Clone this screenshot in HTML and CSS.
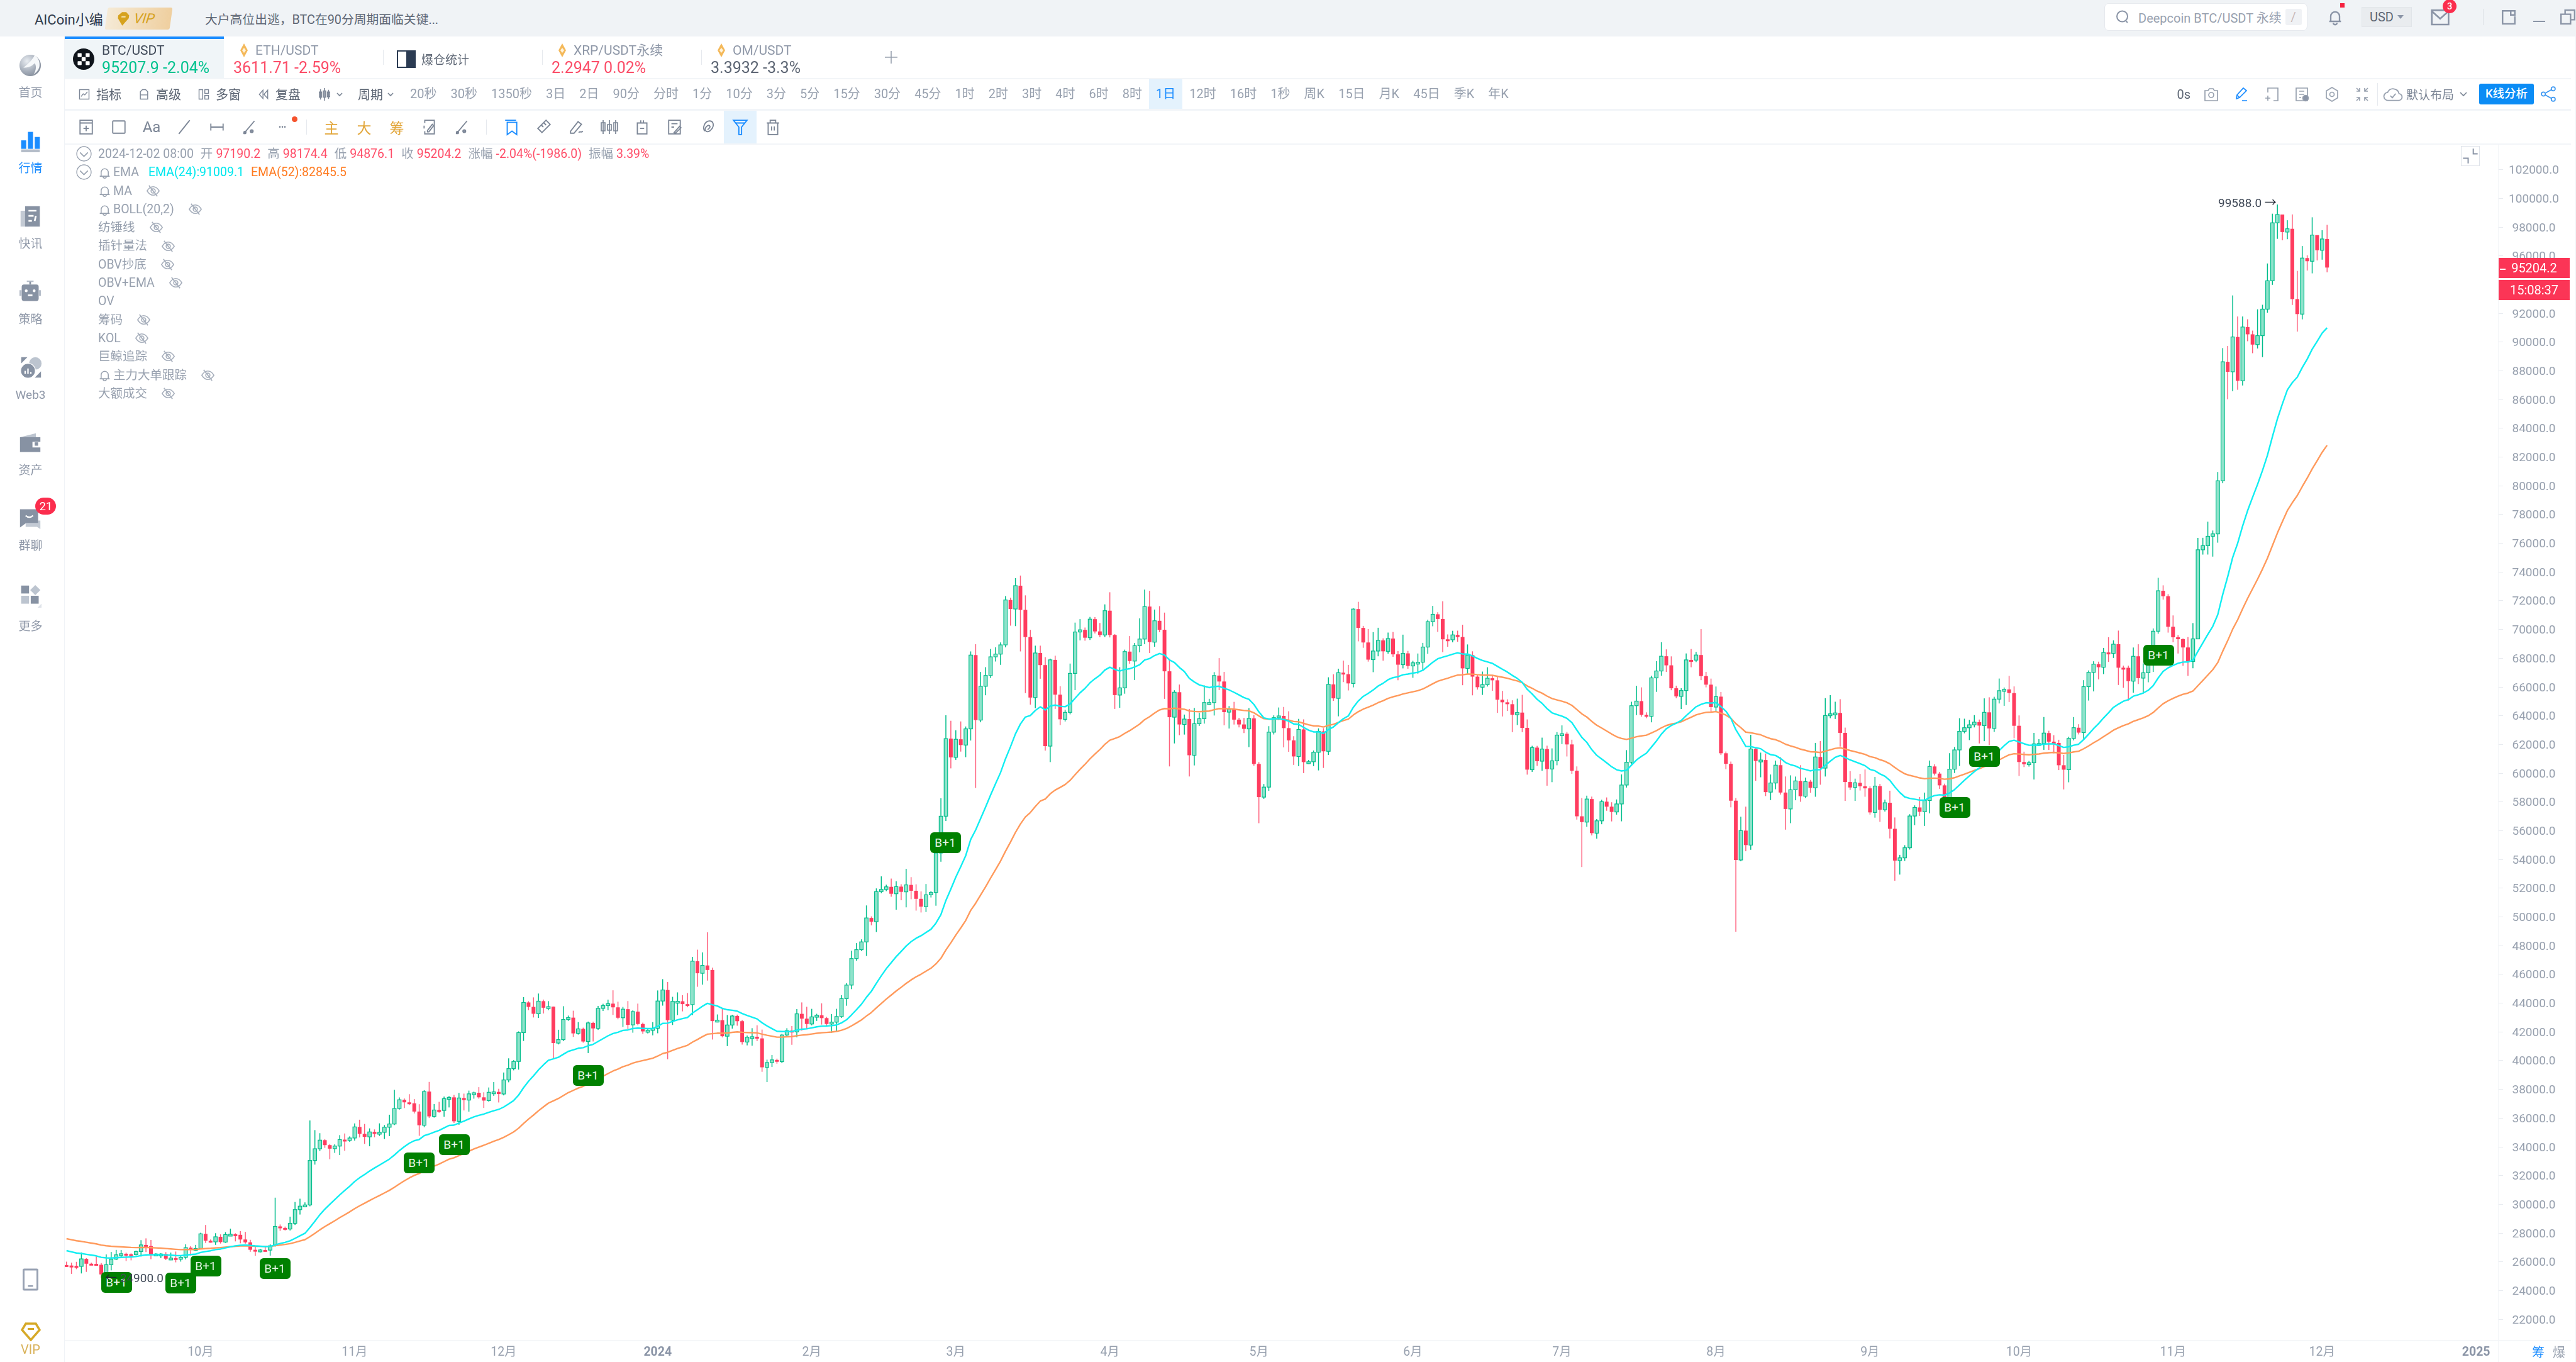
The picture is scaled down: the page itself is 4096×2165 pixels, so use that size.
FILE: index.html
```html
<!DOCTYPE html>
<html lang="zh-CN">
<head>
  <meta charset="utf-8">
  <title>AICoin BTC/USDT</title>
  <link rel="stylesheet" href="styles.css">
</head>
<body>
  <svg class="defs" width="0" height="0">
    <symbol id="eye" viewBox="0 0 24 24"><path d="M2 12c3-5 6.500-7 10-7s7 2 10 7c-3 5-6.500 7-10 7s-7-2-10-7z" fill="none" stroke="currentColor" stroke-width="1.700"/><circle cx="12" cy="12" r="3.500" fill="none" stroke="currentColor" stroke-width="1.700"/><path d="M5 3l14 18" stroke="currentColor" stroke-width="1.700"/></symbol>
    <symbol id="bell" viewBox="0 0 24 24"><path d="M3 19h18M5.500 19v-7a6.500 6.500 0 0 1 13 0v7M9 19.500a3 3 0 0 0 6 0" fill="none" stroke="currentColor" stroke-width="1.800"/></symbol>
    <symbol id="chev" viewBox="0 0 24 24"><circle cx="12" cy="12" r="11" fill="none" stroke="currentColor" stroke-width="1.300"/><path d="M6 10l6 6 6-6" fill="none" stroke="currentColor" stroke-width="1.500"/></symbol>
    <symbol id="coin" viewBox="0 0 16 24"><path d="M8 1l6 11-6 11-6-11z" fill="#f4b95a"/><path d="M8 8l3 4-3 4-3-4z" fill="#fff3dc"/></symbol>
  </svg>

  <header class="topbar">
    <span class="user-name">AICoin小编</span>
    <span class="vip-tag"><svg class="vip-gem" viewBox="0 0 20 24"><path d="M2 7l5-5h6l5 5v4l-8 11-8-11z" fill="#d6a21e"/><rect x="7" y="8" width="6" height="2" fill="#f5e2b0"/></svg>VIP</span>
    <span class="headline">大户高位出逃，BTC在90分周期面临关键...</span>
    <div class="top-right">
      <div class="search">
        <svg class="ic search-ic" viewBox="0 0 24 24"><circle cx="11.500" cy="11" r="8.500"/><path d="M17 18l3 3"/></svg>
        <span class="search-text">Deepcoin BTC/USDT 永续</span>
        <span class="search-key">/</span>
      </div>
      <span class="bell-box">
        <svg class="ic top-ic" viewBox="0 0 24 24"><path d="M4 18h16M6 18v-7a6 6 0 0 1 12 0v7M9.500 20a2.500 2.500 0 0 0 5 0"/></svg>
        <i class="red-dot"></i>
      </span>
      <span class="currency">USD<i class="caret"></i></span>
      <span class="mail-box">
        <svg class="ic top-ic" viewBox="0 0 24 24"><path d="M2 4h20v17H2zM2 5l10 9 10-9"/></svg>
        <b class="mail-badge">3</b>
      </span>
      <i class="top-sep"></i>
      <svg class="ic win-ic" viewBox="0 0 24 24"><path d="M14 3H3v19h18V11M15 3h6v6h-6z"/></svg>
      <i class="win-min"></i>
      <svg class="ic win-ic" viewBox="0 0 24 24"><path d="M2 8h14v14H2zM8 8V2h14v14h-6"/></svg>
    </div>
  </header>

  <div class="main">
    <nav class="side">
      <a class="side-item">
        <svg class="side-ic" viewBox="0 0 40 40"><defs><radialGradient id="globe" cx=".35" cy=".3" r=".8"><stop offset="0" stop-color="#e8ecf1"/><stop offset=".6" stop-color="#a6aeba"/><stop offset="1" stop-color="#7f8896"/></radialGradient></defs><circle cx="20" cy="20" r="19" fill="url(#globe)"/><path d="M28 2c-4 8-10 14-20 22 8 0 14-2 20-8 3 4 3 12-2 20 8-6 12-12 10-22-1-5-4-9-8-12z" fill="#f6f8fa"/></svg>
        <span>首页</span>
      </a>
      <a class="side-item side-active">
        <svg class="side-ic" viewBox="0 0 40 40"><rect x="4" y="19" width="9" height="15" fill="#1a8cff"/><rect x="16" y="4" width="9" height="30" fill="#1a8cff"/><rect x="28" y="13" width="9" height="21" fill="#1a8cff"/><rect x="4" y="35" width="33" height="5" fill="#b5bdc9"/></svg>
        <span>行情</span>
      </a>
      <a class="side-item">
        <svg class="side-ic" viewBox="0 0 40 40"><rect x="3" y="10" width="14" height="28" fill="#c3cad4"/><rect x="11" y="2" width="26" height="36" fill="#8792a3"/><path d="M17 10h14M17 19h9M17 28h6M30 19l-2 9" stroke="#fff" stroke-width="3" fill="none"/></svg>
        <span>快讯</span>
      </a>
      <a class="side-item">
        <svg class="side-ic" viewBox="0 0 40 40"><rect x="14" y="0" width="12" height="2.500" fill="#b5bdc9"/><rect x="18.500" y="2" width="3" height="5" fill="#8792a3"/><rect x="5" y="7" width="30" height="29" rx="4" fill="#8792a3"/><rect x="1" y="17" width="4" height="10" fill="#b5bdc9"/><rect x="35" y="17" width="4" height="10" fill="#b5bdc9"/><circle cx="13" cy="18" r="2.500" fill="#fff"/><circle cx="27" cy="18" r="2.500" fill="#fff"/><path d="M16 26h8" stroke="#fff" stroke-width="3"/></svg>
        <span>策略</span>
      </a>
      <a class="side-item">
        <svg class="side-ic" viewBox="0 0 40 40"><path d="M3 2h11L3 13z" fill="#8792a3"/><path d="M38 27v11H27z" fill="#8792a3"/><circle cx="28" cy="13" r="11" fill="#bcc4cf"/><circle cx="15" cy="26" r="13" fill="#8792a3" stroke="#fff" stroke-width="1.500"/><path d="M10 31v-5M15 31v-9M20 31v-3" stroke="#fff" stroke-width="2.500"/></svg>
        <span>Web3</span>
      </a>
      <a class="side-item">
        <svg class="side-ic" viewBox="0 0 40 40"><path d="M2 10l28-7v7z" fill="#bcc4cf"/><path d="M2 10h36v8H24v10h14v8H2z" fill="#8792a3"/><rect x="28" y="19" width="6" height="6" fill="#8792a3"/></svg>
        <span>资产</span>
      </a>
      <a class="side-item">
        <svg class="side-ic" viewBox="0 0 40 40"><path d="M12 24h26v15l-6-4H12z" fill="#c3cad4"/><path d="M2 4h32v24H13l-11 8z" fill="#8792a3"/><path d="M12 15c4 4 9 4 13 0" stroke="#fff" stroke-width="2.500" fill="none"/></svg>
        <span>群聊</span>
        <b class="side-badge">21</b>
      </a>
      <a class="side-item side-more">
        <svg class="side-ic" viewBox="0 0 40 40"><rect x="4" y="2" width="14" height="14" fill="#8792a3"/><path d="M29 1l9 9-9 9-9-9z" fill="#bcc4cf"/><rect x="4" y="20" width="14" height="14" fill="#bcc4cf"/><rect x="21" y="20" width="14" height="14" fill="#8792a3"/><path d="M42 32v9h-9z" fill="#dfe3e9"/></svg>
        <span>更多</span>
      </a>
      <div class="side-bottom">
        <svg class="phone-ic" viewBox="0 0 26 36"><rect x="2" y="2" width="22" height="32" rx="1" fill="none" stroke="#98a2b3" stroke-width="3"/><rect x="9" y="27" width="8" height="2.500" fill="#98a2b3"/></svg>
        <a class="side-vip">
          <svg class="vip-ic" viewBox="0 0 32 30"><path d="M8 2h16l6 10-14 16L2 12z" fill="none" stroke="#d6a928" stroke-width="3.500"/><rect x="11" y="9" width="10" height="3" fill="#d6a928"/></svg>
          <span>VIP</span>
        </a>
      </div>
    </nav>

    <div class="content">
      <div class="tabs">
        <div class="tab tab-on">
          <svg class="tab-logo" viewBox="0 0 32 32"><circle cx="16" cy="16" r="16" fill="#10151c"/><rect x="7" y="7" width="6" height="6" rx="1" fill="#fff"/><rect x="19" y="7" width="6" height="6" rx="1" fill="#fff"/><rect x="13" y="13" width="6" height="6" rx="1" fill="#fff"/><rect x="7" y="19" width="6" height="6" rx="1" fill="#fff"/><rect x="19" y="19" width="6" height="6" rx="1" fill="#fff"/></svg>
          <div>
            <div class="tab-name tab-name-on">BTC/USDT</div>
            <div class="tab-price up">95207.9 -2.04%</div>
          </div>
        </div>
        <div class="tab tab-pair">
          <div>
            <div class="tab-name"><svg class="tab-coin"><use href="#coin"/></svg>ETH/USDT</div>
            <div class="tab-price down">3611.71 -2.59%</div>
          </div>
        </div>
        <div class="tab tab-stat">
          <i class="stat-ic"><i></i></i>
          <span class="stat-name">爆仓统计</span>
        </div>
        <div class="tab tab-pair">
          <div>
            <div class="tab-name"><svg class="tab-coin"><use href="#coin"/></svg>XRP/USDT永续</div>
            <div class="tab-price down">2.2947 0.02%</div>
          </div>
        </div>
        <div class="tab tab-pair tab-last">
          <div>
            <div class="tab-name"><svg class="tab-coin"><use href="#coin"/></svg>OM/USDT</div>
            <div class="tab-price flat">3.3932 -3.3%</div>
          </div>
        </div>
        <svg class="tab-add" viewBox="0 0 24 24"><path d="M12 2v20M2 12h20"/></svg>
      </div>

      <div class="periods">
        <span class="p-btn"><svg class="ic p-ic" viewBox="0 0 24 24"><rect x="3" y="3" width="18" height="18"/><path d="M6 16l4-5 3 2 5-6"/></svg>指标</span>
        <span class="p-btn"><svg class="ic p-ic" viewBox="0 0 24 24"><path d="M5 21V7l4-4h6l4 4v14zM5 13h14"/></svg>高级</span>
        <span class="p-btn"><svg class="ic p-ic" viewBox="0 0 24 24"><path d="M3 3h7v18H3zM14 3h7v7h-7zM14 14h7v7h-7z"/></svg>多窗</span>
        <span class="p-btn"><svg class="ic p-ic" viewBox="0 0 24 24"><path d="M11 4l-7 8 7 8zM20 4l-7 8 7 8z"/></svg>复盘</span>
        <span class="p-btn p-kind"><svg class="ic p-ic" viewBox="0 0 24 24"><path d="M5 3v18M12 1v22M19 4v16M3 8h4v9H3zM10 6h4v11h-4zM17 8h4v8h-4z"/></svg><svg class="ic mini-chev" viewBox="0 0 12 12"><path d="M2 4l4 4 4-4"/></svg></span>
        <span class="p-btn p-cycle">周期<svg class="ic mini-chev" viewBox="0 0 12 12"><path d="M2 4l4 4 4-4"/></svg></span>
        <span class="p-item">20秒</span><span class="p-item">30秒</span><span class="p-item">1350秒</span><span class="p-item">3日</span><span class="p-item">2日</span><span class="p-item">90分</span><span class="p-item">分时</span><span class="p-item">1分</span><span class="p-item">10分</span><span class="p-item">3分</span><span class="p-item">5分</span><span class="p-item">15分</span><span class="p-item">30分</span><span class="p-item">45分</span><span class="p-item">1时</span><span class="p-item">2时</span><span class="p-item">3时</span><span class="p-item">4时</span><span class="p-item">6时</span><span class="p-item">8时</span><span class="p-item p-on">1日</span><span class="p-item">12时</span><span class="p-item">16时</span><span class="p-item">1秒</span><span class="p-item">周K</span><span class="p-item">15日</span><span class="p-item">月K</span><span class="p-item">45日</span><span class="p-item">季K</span><span class="p-item">年K</span>
        <div class="p-right">
          <span class="zero-s">0s</span>
          <svg class="ic r-ic" viewBox="0 0 24 24"><path d="M2 6h5l2-3h6l2 3h5v16H2z"/><circle cx="12" cy="13" r="4"/></svg>
          <svg class="ic r-ic r-blue" viewBox="0 0 24 24"><path d="M4 19l1-6L15 2l5 4L9 17zM13 22h8M5 13l4 4"/></svg>
          <svg class="ic r-ic" viewBox="0 0 24 24"><path d="M6 9V2h16v20h-7M2 18h8M6 14v8"/></svg>
          <svg class="ic r-ic" viewBox="0 0 24 24"><path d="M3 2h18v20H3zM8 7h8M8 12h8M8 17h3"/><circle cx="18" cy="18" r="4.500" fill="#8a94a6"/></svg>
          <svg class="ic r-ic" viewBox="0 0 24 24"><path d="M12 1l9 5.500v11L12 23l-9-5.500v-11z"/><circle cx="12" cy="12" r="3.500"/></svg>
          <svg class="ic r-ic" viewBox="0 0 24 24"><path d="M3 2l5 5M8 2v5H3M21 2l-5 5M16 2v5h5M3 22l5-5M8 22v-5H3M21 22l-5-5M16 22v-5h5"/></svg>
          <i class="r-sep"></i>
          <svg class="ic cloud-ic" viewBox="0 0 30 24"><path d="M8 21a6 6 0 0 1-1-12 9 9 0 0 1 17 2 5 5 0 0 1-1 10zM11 14l3 3 5-6"/></svg>
          <span class="layout-name">默认布局</span>
          <svg class="ic mini-chev layout-chev" viewBox="0 0 12 12"><path d="M1 3l5 5 5-5"/></svg>
          <span class="k-btn">K线分析</span>
          <svg class="ic share-ic" viewBox="0 0 24 24"><circle cx="19" cy="4" r="3"/><circle cx="4" cy="12" r="3"/><circle cx="19" cy="20" r="3"/><path d="M7 10.500L16 5.500M7 13.500l9 5"/></svg>
        </div>
      </div>

      <div class="tools">
        <span class="t-item"><svg class="ic t-ic" viewBox="0 0 24 24"><path d="M3 2h18v20H3zM3 6h18M12 10v8M8 14h8"/></svg></span>
        <span class="t-item"><svg class="ic t-ic" viewBox="0 0 24 24"><rect x="3" y="3" width="18" height="18" rx="1"/></svg></span>
        <span class="t-item t-text">Aa</span>
        <span class="t-item"><svg class="ic t-ic" viewBox="0 0 24 24"><path d="M4 22L20 2"/></svg></span>
        <span class="t-item"><svg class="ic t-ic" viewBox="0 0 24 24"><path d="M3 7v10M21 7v10M3 12h18"/></svg></span>
        <span class="t-item"><svg class="ic t-ic" viewBox="0 0 24 24"><path d="M3 22L19 3"/><circle cx="15" cy="18" r="2" fill="#8a94a6"/><circle cx="5" cy="20" r="1.500"/></svg></span>
        <span class="t-item t-dots">•••<i class="t-dot"></i></span>
        <i class="t-sep"></i>
        <span class="t-item t-gold">主</span>
        <span class="t-item t-gold">大</span>
        <span class="t-item t-gold">筹</span>
        <span class="t-item"><svg class="ic t-ic" viewBox="0 0 24 24"><path d="M5 6V2h14v20H5v-4M4 10v4M9 17l7-9 2 2-7 9h-2z"/></svg></span>
        <span class="t-item"><svg class="ic t-ic" viewBox="0 0 24 24"><path d="M3 22L19 3"/><circle cx="15" cy="18" r="2" fill="#8a94a6"/><circle cx="5" cy="20" r="1.500"/></svg></span>
        <i class="t-sep"></i>
        <span class="t-item"><svg class="ic t-ic t-blue" viewBox="0 0 24 24"><path d="M3 2h16M6 5h14v18l-7-5-7 5z"/></svg></span>
        <span class="t-item"><svg class="ic t-ic" viewBox="0 0 24 24"><path d="M3 14L15 2l6 6L9 20zM8 9l3 3M12 6l3 3"/></svg></span>
        <span class="t-item"><svg class="ic t-ic" viewBox="0 0 24 24"><path d="M3 18L14 4l5 4L8 21H3zM15 20c2-3 3 1 6-2"/></svg></span>
        <span class="t-item"><svg class="ic t-ic t-wide" viewBox="0 0 32 24"><path d="M6 1v22M16 1v22M26 1v22M3 5h6v13H3zM13 8h6v9h-6zM23 5h6v13h-6z"/></svg></span>
        <span class="t-item"><svg class="ic t-ic" viewBox="0 0 24 24"><path d="M5 6h14v16H5zM10 2v4M14 2v4M9 14h6"/></svg></span>
        <span class="t-item"><svg class="ic t-ic" viewBox="0 0 24 24"><path d="M3 2h17v20H3zM7 7h9M7 12h4M11 20l8-9 2 2-8 8z"/></svg></span>
        <span class="t-item"><svg class="ic t-ic" viewBox="0 0 24 24"><path d="M8 18c-4-5 0-15 7-15 6 0 7 7 3 12-3 4-7 5-9 2-2-3 3-9 6-7 2 2-2 6-3 5"/></svg></span>
        <span class="t-item t-on"><svg class="ic t-ic t-blue" viewBox="0 0 24 24"><path d="M2 2h20l-8 10v11h-4V12zM5 6h14"/></svg></span>
        <span class="t-item"><svg class="ic t-ic" viewBox="0 0 24 24"><path d="M3 6h18M8 6V2h8v4M5 6v17h14V6M10 11v6M14 11v6"/></svg></span>
      </div>

      <div class="chart-row">
        <div class="plot">
          <div class="plot-area" id="plotArea">
            <canvas class="plot-canvas" id="candles"></canvas>
            <div class="legend">
              <div class="lg-row"><svg class="lg-chev"><use href="#chev"/></svg><span>2024-12-02 08:00</span><span class="lg-key">开</span><span class="lg-red">97190.2</span><span class="lg-key">高</span><span class="lg-red">98174.4</span><span class="lg-key">低</span><span class="lg-red">94876.1</span><span class="lg-key">收</span><span class="lg-red">95204.2</span><span class="lg-key">涨幅</span><span class="lg-red">-2.04%(-1986.0)</span><span class="lg-key">振幅</span><span class="lg-red">3.39%</span></div>
              <div class="lg-row"><svg class="lg-chev"><use href="#chev"/></svg><svg class="lg-bell"><use href="#bell"/></svg><span>EMA</span><span class="lg-cyan">EMA(24):91009.1</span><span class="lg-orange">EMA(52):82845.5</span></div>
              <div class="lg-row lg-sub"><svg class="lg-bell"><use href="#bell"/></svg><span>MA</span><svg class="lg-eye"><use href="#eye"/></svg></div>
              <div class="lg-row lg-sub"><svg class="lg-bell"><use href="#bell"/></svg><span>BOLL(20,2)</span><svg class="lg-eye"><use href="#eye"/></svg></div>
              <div class="lg-row lg-sub"><span>纺锤线</span><svg class="lg-eye"><use href="#eye"/></svg></div>
              <div class="lg-row lg-sub"><span>插针量法</span><svg class="lg-eye"><use href="#eye"/></svg></div>
              <div class="lg-row lg-sub"><span>OBV抄底</span><svg class="lg-eye"><use href="#eye"/></svg></div>
              <div class="lg-row lg-sub"><span>OBV+EMA</span><svg class="lg-eye"><use href="#eye"/></svg></div>
              <div class="lg-row lg-sub"><span>OV</span></div>
              <div class="lg-row lg-sub"><span>筹码</span><svg class="lg-eye"><use href="#eye"/></svg></div>
              <div class="lg-row lg-sub"><span>KOL</span><svg class="lg-eye"><use href="#eye"/></svg></div>
              <div class="lg-row lg-sub"><span>巨鲸追踪</span><svg class="lg-eye"><use href="#eye"/></svg></div>
              <div class="lg-row lg-sub"><svg class="lg-bell"><use href="#bell"/></svg><span>主力大单跟踪</span><svg class="lg-eye"><use href="#eye"/></svg></div>
              <div class="lg-row lg-sub"><span>大额成交</span><svg class="lg-eye"><use href="#eye"/></svg></div>
            </div>
            <span class="compress"><svg class="ic" viewBox="0 0 24 24"><path d="M16 2v7h6M2 15h7v7"/></svg></span>
            <span class="hi-mark">99588.0 <b>→</b></span>
            <span class="lo-mark"><b>←</b> 24900.0</span>
          </div>
          <div class="time-axis" id="timeAxis"></div>
        </div>
        <div class="axis-col">
          <div class="price-axis" id="priceAxis">
            <span class="price-tag price-now">95204.2</span>
            <span class="price-tag price-left">15:08:37</span>
          </div>
          <div class="axis-corner"><span class="corner-on">筹</span><span>爆</span></div>
        </div>
      </div>
    </div>
  </div>
  <script src="chart.js"></script>
</body>
</html>
```

FILE: styles.css
```css
html, body { margin: 0; height: 100%; }
body {
  width: 4096px;
  height: 2165px;
  overflow: hidden;
  background: #fff;
  font-family: Roboto, "Noto Sans CJK SC", sans-serif;
  font-size: 20px;
  color: #8a94a6;
}
i { font-style: normal; }
.defs { position: absolute; }
.ic { fill: none; stroke: currentColor; stroke-width: 1.7; }
/* the capture is soft, it was scaled up */
.topbar, .main { filter: blur(0.6px); }

/* top bar */
.topbar {
  height: 58px;
  background: #f0f3f6;
  display: flex;
  align-items: center;
  padding-left: 55px;
  box-sizing: border-box;
}
.user-name { color: #2f3a4a; font-size: 22px; width: 114px; }
.vip-tag {
  width: 103px;
  height: 35px;
  display: flex;
  align-items: center;
  padding-left: 16px;
  box-sizing: border-box;
  color: #d6a21e;
  font-size: 22px;
  font-style: italic;
  background: linear-gradient(90deg, #f5ead6, #efcf9f);
  transform: skewX(-8deg);
  border-radius: 3px;
}
.vip-gem { width: 22px; height: 26px; margin-right: 6px; }
.headline { margin-left: 54px; font-size: 19.8px; color: #5d6674; }
.top-right { margin-left: auto; display: flex; align-items: center; height: 58px; padding-bottom: 4px; box-sizing: border-box; }
.search {
  width: 323px;
  height: 44px;
  background: #fff;
  border: 1px solid #e6e9ee;
  border-radius: 7px;
  box-sizing: border-box;
  display: flex;
  align-items: center;
  padding-left: 16px;
}
.search-ic { width: 24px; height: 26px; color: #8a94a6; stroke-width: 2; flex: none; }
.search-text { margin-left: 13px; font-size: 20px; color: #98a1af; white-space: nowrap; }
.search-key {
  width: 26px;
  height: 26px;
  margin-left: 6px;
  background: #f0f2f5;
  color: #c8b8b8;
  text-align: center;
  line-height: 26px;
  border-radius: 3px;
}
.bell-box { position: relative; margin-left: 30px; width: 28px; height: 32px; color: #8a94a6; }
.top-ic { width: 28px; height: 32px; stroke-width: 2; }
.red-dot { position: absolute; right: -1px; top: -6px; width: 7px; height: 7px; background: #f5213f; }
.currency {
  width: 80px;
  height: 32px;
  margin-left: 28px;
  background: #e9ecef;
  border: 1px solid #e1e5e9;
  box-sizing: border-box;
  color: #5d6674;
  font-size: 20px;
  display: flex;
  align-items: center;
  justify-content: center;
}
.caret { margin-left: 6px; border: 5px solid transparent; border-top: 6px solid #8a94a6; border-bottom: 0; }
.mail-box { position: relative; margin-left: 28px; width: 34px; height: 32px; color: #8a94a6; }
.mail-box .top-ic { width: 34px; }
.mail-badge {
  position: absolute;
  left: 21px;
  top: -12px;
  width: 22px;
  height: 22px;
  border-radius: 50%;
  background: #fb2d4d;
  color: #fff;
  font-size: 15px;
  font-weight: 500;
  line-height: 22px;
  text-align: center;
}
.top-sep { width: 1px; height: 26px; background: #dde1e6; margin-left: 51px; }
.win-ic { width: 26px; height: 28px; margin-left: 27px; color: #8a94a6; stroke-width: 2.2; }
.win-min { width: 19px; height: 2px; background: #8a94a6; margin: 14px 0 0 26px; }
.win-ic:last-child { margin-left: 23px; }

/* main frame */
.main { display: flex; height: 2107px; }
.side {
  width: 103px;
  flex: none;
  border-right: 1px solid #f0f3f7;
  box-sizing: border-box;
  display: flex;
  flex-direction: column;
  align-items: center;
  padding: 9px 5px 0 0;
  color: #8f98a8;
}
.side-item {
  position: relative;
  height: 120px;
  flex: none;
  display: flex;
  flex-direction: column;
  align-items: center;
  padding-top: 15px;
  box-sizing: border-box;
  font-size: 19px;
  line-height: 26px;
}
.side-ic { width: 36px; height: 44px; margin-bottom: 9px; }
.side-active { color: #1a8cff; }
.side-more { padding-top: 18px; }
.side-more span { margin-top: 5px; }
.side-badge {
  position: absolute;
  left: 27px;
  top: 4px;
  min-width: 33px;
  height: 27px;
  border-radius: 14px;
  background: #fb2d4d;
  color: #fff;
  font-size: 18px;
  font-weight: 400;
  line-height: 27px;
  text-align: center;
}
.side-bottom { margin-top: auto; display: flex; flex-direction: column; align-items: center; }
.phone-ic { width: 27px; height: 36px; margin-bottom: 50px; }
.side-vip { display: flex; flex-direction: column; align-items: center; color: #d9b25a; font-size: 20px; line-height: 26px; padding-bottom: 7px; }
.vip-ic { width: 32px; height: 30px; }

.content { flex: 1; display: flex; flex-direction: column; min-width: 0; padding-right: 7px; }
.content { border-right: 1px solid #f0f3f7; }

/* tabs */
.tabs { height: 66px; flex: none; display: flex; align-items: center; }
.tab {
  width: 253px;
  height: 66px;
  flex: none;
  box-sizing: border-box;
  display: flex;
  align-items: center;
  position: relative;
}
.tab-on { background: #f0f5f8; border-top: 4px solid #1a8cff; padding: 2px 0 0 13px; }
.tab-logo { width: 34px; height: 34px; margin-right: 12px; }
.tab-pair { padding: 5px 0 0 15px; }
.tab-stat { padding: 5px 0 0 22px; }
.tab-stat::before, .tab-pair:not(:nth-child(2))::before {
  content: "";
  position: absolute;
  left: 0;
  top: 21px;
  height: 24px;
  width: 1px;
  background: #e6e9ee;
}
.tab-name { font-size: 21px; line-height: 28px; color: #8f98a8; display: flex; align-items: center; white-space: nowrap; }
.tab-name-on { color: #404a59; }
.tab-coin { width: 16px; height: 24px; margin: 0 10px 0 9px; flex: none; }
.tab-price { font-size: 25px; line-height: 28px; white-space: nowrap; }
.up { color: #00c28e; }
.down { color: #fb4d68; }
.flat { color: #5d6674; }
.stat-ic { width: 30px; height: 28px; border: 2px solid #2b3b52; box-sizing: border-box; margin-right: 9px; display: block; }
.stat-ic i { display: block; width: 50%; height: 100%; margin-left: 50%; background: #2b3b52; }
.stat-name { font-size: 19px; color: #5d6674; }
.tab-last { width: 290px; }
.tab-add { width: 24px; height: 24px; stroke: #98a1af; stroke-width: 1.6; }

/* period row */
.periods {
  height: 52px;
  flex: none;
  border-top: 2px solid #f2f5f8;
  border-bottom: 3px solid #f2f5f8;
  box-sizing: border-box;
  display: flex;
  align-items: center;
  padding-left: 21px;
  color: #98a1af;
  font-size: 20px;
  white-space: nowrap;
}
.p-btn { display: flex; align-items: center; color: #5d6674; margin-right: 26px; }
.p-ic { width: 20px; height: 22px; margin-right: 9px; color: #7c8696; flex: none; }
.p-kind { margin-right: 23px; }
.p-kind .p-ic { width: 24px; margin-right: 6px; }
.mini-chev { width: 12px; height: 12px; flex: none; color: #7c8696; }
.p-cycle { margin-right: 14px; }
.p-cycle .mini-chev { margin-left: 6px; }
.p-item { height: 47px; line-height: 47px; padding: 0 11px; }
.p-on { background: #e4f2fd; color: #1a8cff; }
.p-right { margin-left: auto; display: flex; align-items: center; padding-right: 23px; color: #98a1af; }
.zero-s { margin-right: 21px; color: #5d6674; }
.r-ic { width: 24px; height: 28px; margin-right: 24px; flex: none; color: #98a1af; }
.r-blue { color: #1a8cff; }
.r-sep { width: 1px; height: 36px; background: #e6e9ee; margin: 0 8px 0 -12px; }
.cloud-ic { width: 32px; height: 26px; color: #98a1af; margin-right: 5px; }
.layout-name { font-size: 19px; color: #7c8696; }
.layout-chev { margin: 0 19px 0 9px; }
.k-btn {
  width: 87px;
  height: 33px;
  background: #0b8cf5;
  color: #fff;
  font-size: 18.5px;
  font-weight: 500;
  text-align: center;
  line-height: 33px;
  border-radius: 3px;
}
.share-ic { width: 25px; height: 27px; margin-left: 11px; color: #3d98f2; }

/* drawing tools */
.tools {
  height: 54px;
  flex: none;
  border-bottom: 2px solid #f2f5f8;
  box-sizing: border-box;
  display: flex;
  align-items: center;
  padding-left: 8px;
  color: #7c8696;
}
.t-item { width: 52px; height: 52px; display: flex; align-items: center; justify-content: center; position: relative; flex: none; }
.t-ic { width: 26px; height: 28px; }
.t-wide { width: 32px; }
.t-text { font-size: 24px; }
.t-dots { font-size: 12px; letter-spacing: 0; }
.t-dot { position: absolute; right: 2px; top: 9px; width: 9px; height: 9px; border-radius: 50%; background: #f5532d; }
.t-sep { width: 1px; height: 24px; background: #e6e9ee; margin: 0 13px 0 12px; flex: none; }
.t-gold { color: #e2a63a; font-size: 23px; }
.t-blue { color: #1a8cff; }
.t-on { background: #e4f2fd; }

/* chart */
.chart-row { flex: 1; display: flex; min-height: 0; }
.plot { flex: 1; display: flex; flex-direction: column; min-width: 0; }
.plot-area { position: relative; height: 1900px; overflow: hidden; }
.plot-canvas { position: absolute; left: 0; top: 0; width: 100%; height: 100%; }
.legend { position: absolute; left: 18px; top: 0; font-size: 19.5px; line-height: 29.3px; color: #98a1af; }
.lg-row { display: flex; align-items: center; height: 29.3px; white-space: nowrap; }
.lg-sub { margin-left: 35px; }
.lg-chev { width: 25px; height: 25px; margin-right: 10px; color: #98a1af; }
.lg-bell { width: 21px; height: 22px; margin-right: 3px; color: #98a1af; }
.lg-eye { width: 23px; height: 23px; margin-left: 22px; color: #a8b0bd; }
.lg-key { margin: 0 5px 0 11px; }
.lg-red { color: #ff4d68; }
.lg-cyan { color: #00e8ee; margin-left: 15px; }
.lg-orange { color: #ff7a1f; margin-left: 11px; }
.compress {
  position: absolute;
  right: 29px;
  top: 2px;
  width: 30px;
  height: 32px;
  border: 1px solid #dfe3ea;
  box-sizing: border-box;
  color: #8a94a6;
  display: flex;
}
.hi-mark, .lo-mark { position: absolute; font-size: 19px; line-height: 24px; color: #3f4856; white-space: nowrap; z-index: 2; }
.hi-mark { left: 3424px; top: 81px; }
.lo-mark { left: 64px; top: 1790px; }
.hi-mark b, .lo-mark b { font-weight: 400; color: #1f2733; }
.badge {
  position: absolute;
  width: 49px;
  height: 33px;
  margin: -16.5px 0 0 -24.5px;
  border-radius: 6px;
  background: #008000;
  color: #e6f5e6;
  font-size: 19px;
  line-height: 33px;
  text-align: center;
  z-index: 1;
}
.time-axis { height: 35px; flex: none; position: relative; border-top: 2px solid #f5f7f9; box-sizing: border-box; font-size: 19.5px; color: #98a1af; }
.t-label { position: absolute; top: 3px; line-height: 28px; transform: translateX(-50%); white-space: nowrap; }
.t-year { font-weight: 700; color: #8a94a6; }
.axis-col { width: 116px; flex: none; display: flex; flex-direction: column; border-left: 1px solid #f3f5f8; box-sizing: border-box; }
.price-axis { height: 1900px; position: relative; padding-top: 17.15px; box-sizing: border-box; overflow: hidden; }
.price-row {
  height: 45.7px;
  line-height: 45.7px;
  font-size: 19px;
  color: #98a1af;
  text-align: center;
  padding-right: 3px;
  position: relative;
}
.price-row::before { content: ""; position: absolute; left: 0; top: 22px; width: 7px; height: 1px; background: #e8ebf0; }
.price-tag {
  position: absolute;
  left: 0;
  width: 113px;
  height: 32px;
  background: #fb3556;
  color: #fff;
  font-size: 20px;
  line-height: 32px;
  text-align: center;
}
.price-now { top: 180px; }
.price-now::before { content: ""; position: absolute; left: 2px; top: 17px; width: 9px; height: 1.5px; background: #fff; }
.price-left { top: 215px; }
.axis-corner { height: 35px; display: flex; align-items: center; justify-content: space-between; padding: 0 9px 0 53px; border-top: 2px solid #f5f7f9; box-sizing: border-box; font-size: 20px; color: #98a1af; }
.corner-on { color: #1a8cff; }
```

FILE: chart.js
```js
// daily closes, one array per month, first one starts on 2023-09-04
var START = Date.UTC(2023, 8, 4);
var closes = [].concat(
  [25779,25753,25720,26240,25905,25895,25832,25162,25840,26222,26522,26600,26568,26534,26754,27211,27132,26567,26579,26579,26256,26298,26217,26352,27021,26911,26967],
  [27983,27504,27426,27778,27412,27931,27956,27917,27590,27391,26875,26759,26862,26852,27154,28500,28395,28320,28713,29669,29909,29992,33086,33901,34502,34156,33909,34089,34538,34484,34650],
  [35421,34938,34733,35071,35011,35046,35399,35624,36702,37310,37132,37063,36491,35538,37880,36154,36596,36568,37386,37476,35813,37432,37289,37720,37796,37479,37254,37831,37858,37712],
  [38688,39476,39978,41980,44080,43772,43293,44170,43713,43789,41253,41492,42892,43023,41929,42240,41364,42657,42275,43668,43861,43997,43740,43016,43613,42520,43442,42581,42066,42140,42283],
  [44180,44945,42848,44151,44162,43965,43929,46951,46110,46654,46339,42782,42847,41732,42511,43137,42776,41327,41659,41696,41580,39568,39897,40084,39961,41816,42120,42035,43288,42952,42582],
  [43075,43185,42991,42582,42708,43098,44349,45288,47132,47751,48293,49958,49699,51795,51939,52122,51642,52137,51774,52258,51849,51288,50744,51568,51728,54476,57037,62432,61130],
  [62387,61987,63113,68245,63724,66074,66823,68124,68313,68955,72078,71452,73072,71388,69499,65291,68390,67548,61912,67913,65491,63778,64262,66972,69851,70000,69455,70744,69892,69645,71333],
  [69645,65463,65963,68487,67830,68896,69360,71620,69146,70631,70006,67116,63924,65662,63419,63793,61277,63470,63818,64941,64941,66819,66407,64276,64481,63755,63419,63113,63841,60672],
  [58364,59060,62882,63892,64012,63165,62312,61193,63074,60799,60825,61483,62936,61552,66206,65235,67024,66915,66274,71446,70136,69122,67929,68526,69265,68507,69394,68296,67578,68364,67491],
  [67706,67751,68804,70567,71082,70757,69342,69310,69648,69500,67321,68243,66747,66010,66191,66636,66490,65140,64960,64828,64096,64245,63180,60277,61806,60864,61706,60319,60887,62678],
  [62772,62029,60200,57030,56628,58230,55857,56714,58047,57700,57334,57889,59204,60790,64724,65043,64087,63987,66660,67139,68165,67532,65936,65372,65777,67910,67896,68249,66784,66188,64628],
  [65354,61415,60680,58116,53991,56034,55027,61710,60881,60945,58712,59346,60587,58683,57541,58874,59491,58426,59438,59013,61156,60381,64037,64157,64220,62834,59415,59034,59359,59119,58974],
  [57301,59132,57487,57971,56160,53950,54139,54841,57050,57646,57343,58127,60498,60000,59182,58192,60309,61649,62940,63192,63394,63577,63339,64262,63143,65181,65769,65858,65602,63327],
  [60805,60649,60754,62067,62089,62818,62224,62131,60582,60274,62445,63193,62851,66046,67041,67612,67399,68428,68362,69001,67367,67361,66432,68161,66642,67014,67929,69907,72720,72339,70215],
  [69482,69358,68775,67800,69372,75571,75857,76509,76677,80370,88648,87952,90375,87325,91066,90558,89845,90464,92310,94286,98317,98892,97672,97900,93010,91965,95863,95643,97460,96407],
  [97190,95204]
);

// the wicks that stand out, [high, low]
var wicks = {
  '2023-09-11':[25950,24900], '2023-09-12':[26550,25130], '2023-10-01':[28060,26950], '2023-10-02':[28600,27350],
  '2023-10-16':[30500,27100], '2023-10-20':[30200,28600], '2023-10-23':[35870,29900], '2023-10-24':[35200,32800],
  '2023-11-09':[38000,35550], '2023-11-14':[37000,34800], '2023-11-15':[37980,35400], '2023-11-21':[37650,35700],
  '2023-12-05':[44450,41400], '2023-12-08':[44700,43000], '2023-12-11':[43800,40130], '2023-12-18':[42750,40560],
  '2024-01-03':[45500,40130], '2024-01-08':[47250,43200], '2024-01-11':[48960,45600], '2024-01-12':[46500,41500],
  '2024-01-23':[40100,38540], '2024-02-28':[64060,56700], '2024-02-29':[63676,60364], '2024-03-04':[68500,62300],
  '2024-03-05':[69000,59000], '2024-03-14':[73777,68500], '2024-03-15':[72400,65600], '2024-03-16':[70000,64800],
  '2024-03-17':[68900,64550], '2024-03-18':[68900,66600], '2024-03-19':[68100,61600], '2024-03-20':[68000,60800],
  '2024-03-21':[68200,64500], '2024-04-02':[69700,64500], '2024-04-08':[72800,69000], '2024-04-12':[71200,65200],
  '2024-04-13':[68000,60500], '2024-04-14':[65800,62100], '2024-04-17':[64500,59800], '2024-05-01':[60800,56550],
  '2024-05-03':[63300,58800], '2024-05-15':[66700,61300], '2024-05-20':[71500,66000], '2024-05-21':[71950,69200],
  '2024-06-07':[71990,68450], '2024-07-04':[60500,56800], '2024-07-05':[58300,53500], '2024-07-07':[58400,55700],
  '2024-07-15':[65000,60650], '2024-07-29':[70050,66500], '2024-08-05':[58300,49000], '2024-08-06':[57000,53900],
  '2024-08-07':[57700,54600], '2024-08-08':[62700,54700], '2024-08-09':[61800,59500], '2024-08-15':[59800,56100],
  '2024-08-25':[65000,63800], '2024-08-27':[63200,58100], '2024-09-06':[56950,52550], '2024-10-10':[61300,58900],
  '2024-10-14':[66500,62400], '2024-10-29':[73620,69730], '2024-11-03':[69400,67500], '2024-11-04':[69500,66800],
  '2024-11-06':[76400,69400], '2024-11-11':[89600,80200], '2024-11-13':[93265,86600], '2024-11-14':[91800,86700],
  '2024-11-15':[91800,87000], '2024-11-21':[98950,94000], '2024-11-22':[99588,97200], '2024-11-23':[98800,97100],
  '2024-11-25':[98900,92600], '2024-11-26':[94970,90750], '2024-11-27':[96700,91600], '2024-11-29':[98700,94800],
  '2024-11-30':[97450,95700], '2024-12-01':[97800,95750], '2024-12-02':[98174,94876]
};

// page coordinates of the signal labels
var signals = [[185,2038],[287,2039],[327,2012],[437,2016],[666,1848],[722,1819],[935,1709],[1503,1339],[3108,1283],[3155,1202],[3432,1041]];

var monthTicks = [
  ['10月',2023,9],['11月',2023,10],['12月',2023,11],['2024',2024,0,1],['2月',2024,1],['3月',2024,2],['4月',2024,3],['5月',2024,4],
  ['6月',2024,5],['7月',2024,6],['8月',2024,7],['9月',2024,8],['10月',2024,9],['11月',2024,10],['12月',2024,11],['2025',2025,0,1]
];

var DAY = 86400000;
var X0 = 319, STEP = 7.9;
function dayX(i) { return X0 + (i - 27) * STEP; }
function priceY(p) { return 270 + (102000 - p) * 0.02285; }

var area = document.getElementById('plotArea');
var box = area.getBoundingClientRect();
var canvas = document.getElementById('candles');
canvas.width = box.width;
canvas.height = box.height;
var ctx = canvas.getContext('2d');
ctx.translate(-box.left, -box.top);

var seed = 7;
function rnd() {
  seed = (seed * 1103515245 + 12345) % 2147483648;
  return seed / 2147483648;
}

var prev = 25812;
closes.forEach(function (c, i) {
  var key = new Date(START + i * DAY).toISOString().slice(0, 10);
  var top = Math.max(prev, c), bot = Math.min(prev, c);
  var r1 = rnd(), r2 = rnd();
  var hi = top + c * (0.002 + 0.02 * r1 * r1);
  var lo = bot - c * (0.002 + 0.02 * r2 * r2);
  if (wicks[key]) { hi = wicks[key][0]; lo = wicks[key][1]; }

  var x = dayX(i);
  var rising = c >= prev;
  ctx.fillStyle = rising ? '#00bd8b' : '#ff5f7c';
  ctx.fillRect(x - 0.75, priceY(hi), 1.5, priceY(lo) - priceY(hi));

  var y = priceY(top), h = Math.max(priceY(bot) - y, 3);
  if (rising) {
    ctx.fillStyle = '#8fe3cb';
    ctx.fillRect(x - 2.75, y, 5.5, h);
    ctx.strokeStyle = '#00bd8b';
    ctx.lineWidth = 1.2;
    ctx.strokeRect(x - 2.75, y, 5.5, h);
  } else {
    ctx.fillStyle = '#ff3c5f';
    ctx.fillRect(x - 3, y, 6, h);
  }
  prev = c;
});

function drawEma(period, start, color) {
  var k = 2 / (period + 1), v = start;
  ctx.beginPath();
  closes.forEach(function (c, i) {
    v = i ? c * k + v * (1 - k) : start;
    if (i) ctx.lineTo(dayX(i), priceY(v)); else ctx.moveTo(dayX(i), priceY(v));
  });
  ctx.strokeStyle = color;
  ctx.lineWidth = 2.4;
  ctx.lineJoin = 'round';
  ctx.stroke();
}
drawEma(52, 27646, '#ff9a5c');
drawEma(24, 26814, '#10eef2');

signals.forEach(function (s) {
  var el = document.createElement('span');
  el.className = 'badge';
  el.textContent = 'B+1';
  el.style.left = (s[0] - box.left) + 'px';
  el.style.top = (s[1] - box.top) + 'px';
  area.appendChild(el);
});

var axis = document.getElementById('timeAxis');
monthTicks.forEach(function (t) {
  var el = document.createElement('span');
  el.className = t[3] ? 't-label t-year' : 't-label';
  el.textContent = t[0];
  var i = (Date.UTC(t[1], t[2], 1) - START) / DAY;
  el.style.left = (dayX(i) - box.left) + 'px';
  axis.appendChild(el);
});

var prices = document.getElementById('priceAxis');
var first = prices.firstElementChild;
for (var p = 102000; p >= 22000; p -= 2000) {
  var row = document.createElement('div');
  row.className = 'price-row';
  row.textContent = p + '.0';
  prices.insertBefore(row, first);
}
```
